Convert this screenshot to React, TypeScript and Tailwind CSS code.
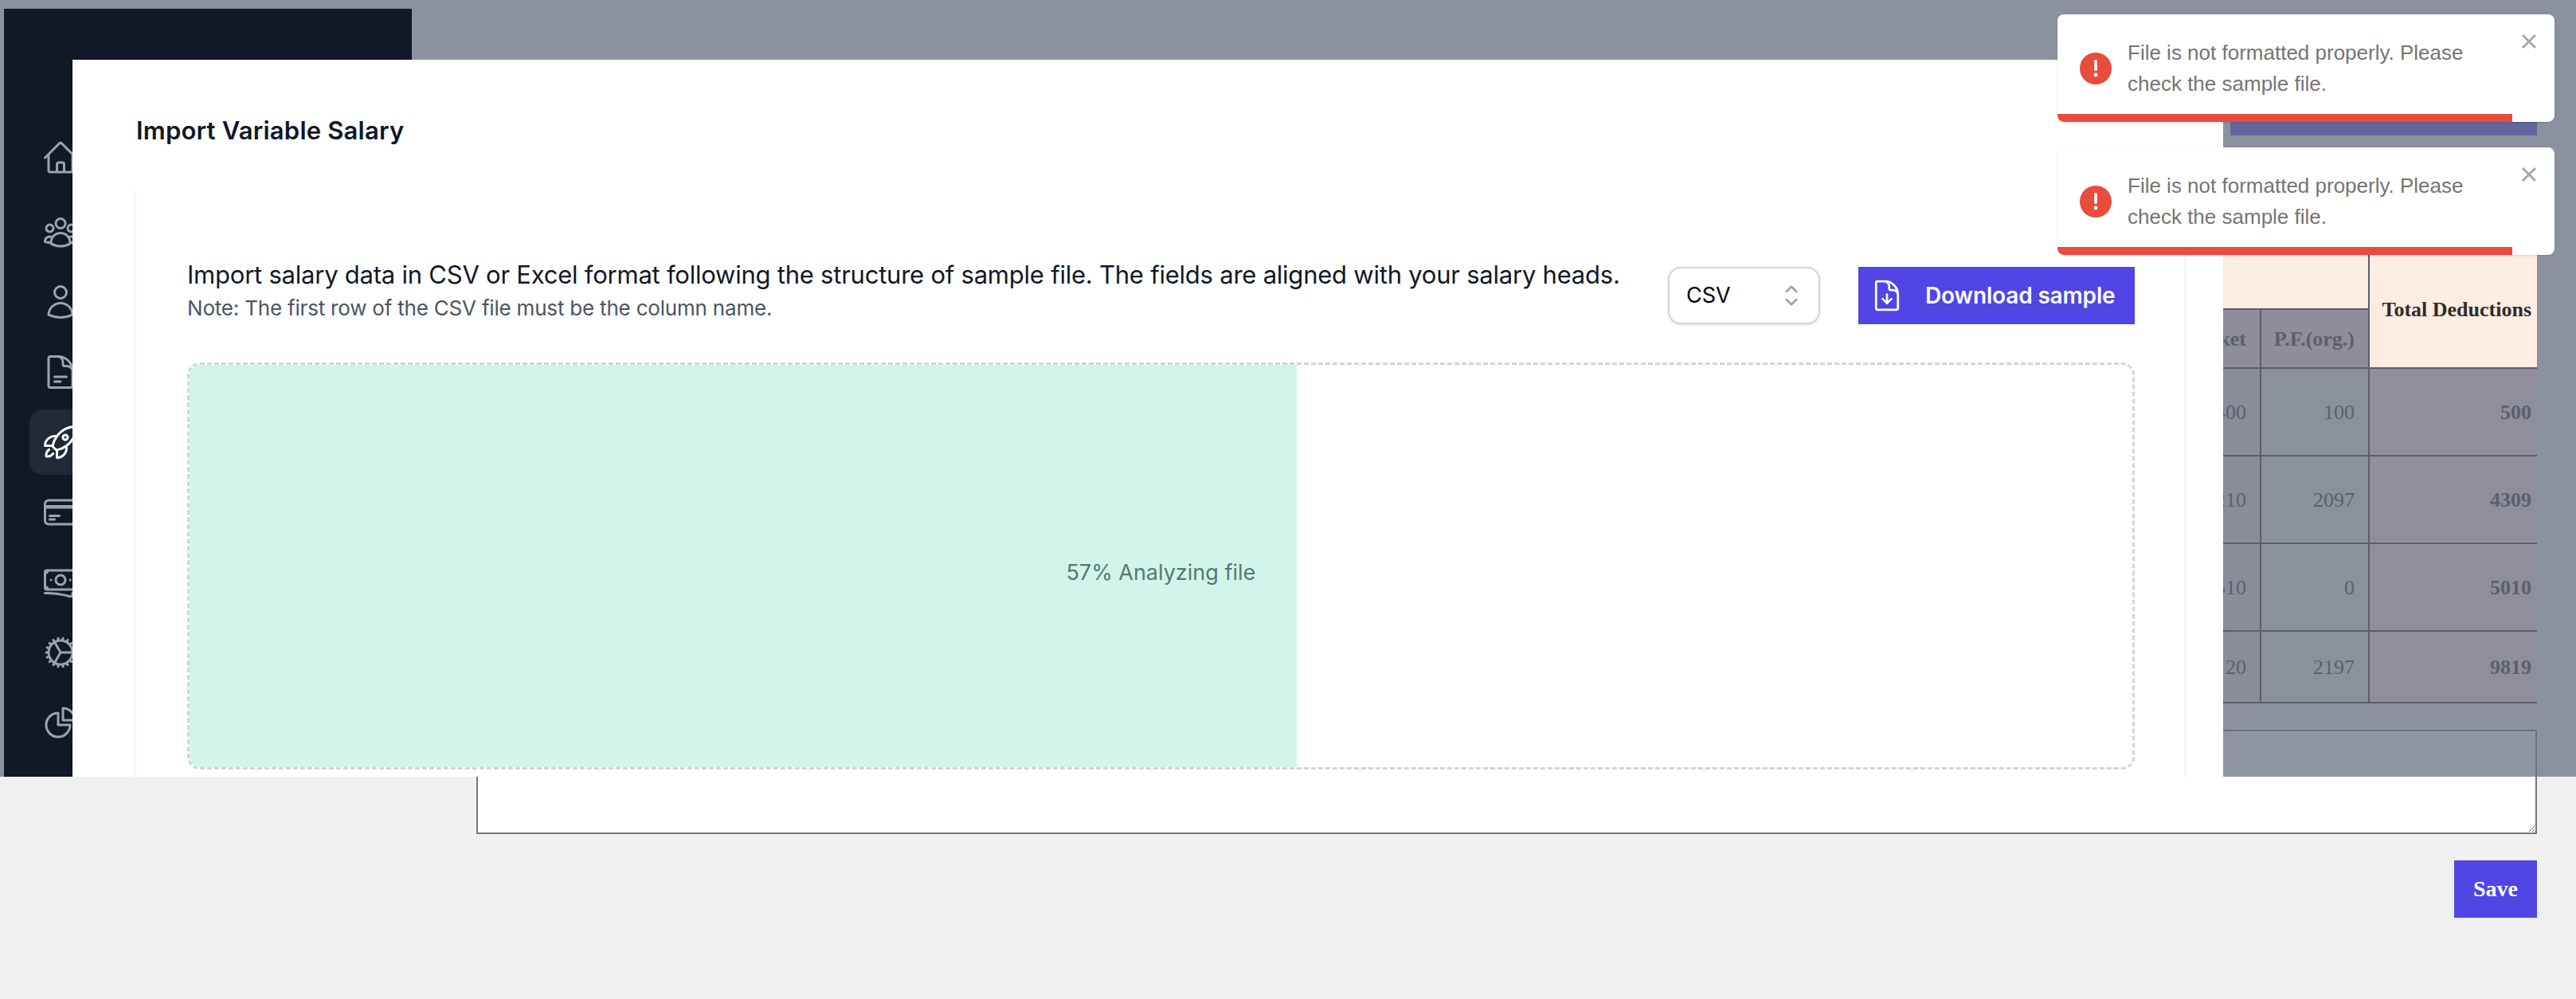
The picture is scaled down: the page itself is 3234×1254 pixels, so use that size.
import React from "react";
import {
  HiOutlineHome,
  HiOutlineUserGroup,
  HiOutlineUser,
  HiOutlineDocumentText,
  HiOutlineRocketLaunch,
  HiOutlineCreditCard,
  HiOutlineBanknotes,
  HiOutlineCog,
  HiOutlineChartPie,
  HiOutlineDocumentArrowDown,
  HiOutlineChevronUpDown,
} from "react-icons/hi2";

const navItems = [
  { Icon: HiOutlineHome, first: true },
  { Icon: HiOutlineUserGroup },
  { Icon: HiOutlineUser },
  { Icon: HiOutlineDocumentText },
  { Icon: HiOutlineRocketLaunch, active: true },
  { Icon: HiOutlineCreditCard },
  { Icon: HiOutlineBanknotes },
  { Icon: HiOutlineCog },
  { Icon: HiOutlineChartPie },
];

const rows = [
  { h: "h-[110px]", a: "400", b: "100", c: "500" },
  { h: "h-[110px]", a: "210", b: "2097", c: "4309" },
  { h: "h-[110px]", a: "510", b: "0", c: "5010" },
  { h: "h-[90px]", a: "120", b: "2197", c: "9819" },
];

function Toast() {
  return (
    <div className="relative h-[135px] w-[624px] overflow-hidden rounded-lg bg-white shadow-sm">
      <div className="flex h-[135px] items-center pl-[28px]">
        <div className="flex h-[40px] w-[40px] shrink-0 items-center justify-center rounded-full bg-[#e74c3c]">
          <svg width="8" height="24" viewBox="0 0 8 24" fill="white">
            <rect x="2.2" y="1" width="3.6" height="14" rx="1.6" />
            <circle cx="4" cy="20" r="2.4" />
          </svg>
        </div>
        <p className="ml-[20px] w-[480px] text-[26px] leading-[39px] text-[#757575] [font-family:'Liberation_Sans',Arial,sans-serif]">
          File is not formatted properly. Please check the sample file.
        </p>
      </div>
      <svg className="absolute right-[22px] top-[24px]" width="20" height="20" viewBox="0 0 20 20" stroke="#a9a9a9" strokeWidth="3" fill="none">
        <path d="M2 2 L18 18 M18 2 L2 18" />
      </svg>
      <div className="absolute bottom-0 left-0 h-[10px] w-[571px] rounded-bl-lg bg-[#e74c3c]" />
    </div>
  );
}

export default function App() {
  return (
    <div className="relative flex h-[1254px] w-[3234px] overflow-hidden bg-[#f0f0f0] [font-family:Inter,sans-serif]">
      {/* Sidebar */}
      <aside className="relative z-20 ml-[5px] mt-[11px] flex h-[964px] w-[512px] shrink-0 flex-col bg-[#111827] pl-[32px] pt-[146px]">
        <nav className="flex flex-col gap-[6px]">
          {navItems.map(({ Icon, active, first }, i) => (
            <div
              key={i}
              className={`flex h-[82px] w-[440px] items-center rounded-2xl pl-[15px] ${active ? "bg-[#1f2937] text-white" : "text-[#9ca3af]"} ${first ? "mb-[5px]" : ""}`}
            >
              <Icon size={48} strokeWidth={1.5} />
            </div>
          ))}
        </nav>
      </aside>

      {/* Page beneath the dialog */}
      <main className="flex min-w-0 flex-1 flex-col pl-[81px] pr-[49px] [font-family:'Liberation_Serif','Times_New_Roman',serif]">
        <div className="mt-[90px] h-[80px] w-[385px] self-end bg-[#4f46e5]" />
        <table className="relative z-10 mt-[146px] w-full table-fixed border-collapse text-[26px] text-[#5b606c]">
          <colgroup>
            <col />
            <col className="w-[136px]" />
            <col className="w-[211px]" />
          </colgroup>
          <thead>
            <tr className="h-[72px] bg-[#f9ede4]">
              <th colSpan={2} className="border-b-2 border-[#5a5f6b]" />
              <th rowSpan={2} className="border-b-2 border-l-2 border-[#5a5f6b] bg-[#fcece2] pr-[7px] text-right text-[26px] font-bold text-[#2e2c2c]">
                Total Deductions
              </th>
            </tr>
            <tr className="h-[74px] bg-[#8e8d99]">
              <th className="border-b-2 border-[#5a5f6b] pr-[17px] text-right font-bold">Pocket</th>
              <th className="border-b-2 border-l-2 border-[#5a5f6b] pr-[17px] text-right font-bold">P.F.(org.)</th>
            </tr>
          </thead>
          <tbody>
            {rows.map((r, i) => (
              <tr key={i} className={r.h}>
                <td className="border-b-2 border-[#5a5f6b] bg-[#8a8c98] pr-[17px] text-right">{r.a}</td>
                <td className="border-b-2 border-l-2 border-[#5a5f6b] bg-[#8a9199] pr-[17px] text-right">{r.b}</td>
                <td className="border-b-2 border-l-2 border-[#5a5f6b] bg-[#8f8e9a] pr-[7px] text-right font-bold">{r.c}</td>
              </tr>
            ))}
          </tbody>
        </table>
        <textarea className="mt-[33px] block h-[131px] w-full shrink-0 border-2 border-[#767676] bg-white" />
        <div className="mt-[33px] flex justify-end">
          <button className="h-[72px] w-[104px] bg-[#4f46e5] text-[28px] font-bold text-white">Save</button>
        </div>
      </main>

      {/* Overlay */}
      <div className="absolute inset-x-0 top-0 z-[5] h-[975px] bg-gray-500/75" />

      {/* Dialog */}
      <section className="absolute left-[91px] top-[75px] z-30 flex h-[900px] w-[2700px] flex-col overflow-hidden bg-white pl-[77px] pr-[46px]">
        <h2 className="ml-[3px] mt-[69px] h-[40px] text-[31px] font-semibold leading-[40px] tracking-[0.2px] text-[#111827]">Import Variable Salary</h2>
        <div className="mt-[56px] flex flex-1 flex-col border-x-[3px] border-[#f6f6f6] pl-[64px] pr-[62px] pt-[85px]">
          <div className="flex items-end">
            <div className="flex-1">
              <p className="text-[31px] leading-[40px] tracking-[-0.23px] text-[#111827]">
                Import salary data in CSV or Excel format following the structure of sample file. The fields are aligned with your salary heads.
              </p>
              <p className="mt-[2px] text-[26px] leading-[40px] tracking-[-0.2px] text-[#4b5563]">
                Note: The first row of the CSV file must be the column name.
              </p>
            </div>
            <div className="flex h-[72px] w-[191px] items-center justify-between rounded-2xl border-2 border-[#d1d5db] bg-white pl-[21px] pr-[14px] text-[27px] text-black shadow-sm">
              CSV
              <HiOutlineChevronUpDown size={40} className="text-[#9ca3af]" />
            </div>
            <button className="ml-[48px] flex h-[72px] w-[347px] items-center bg-[#4f46e5] pl-[14px] text-[28px] font-semibold tracking-[-0.15px] text-white">
              <HiOutlineDocumentArrowDown size={44} />
              <span className="ml-[26px]">Download sample</span>
            </button>
          </div>
          <div className="mt-[48px] h-[511px] w-full overflow-hidden rounded-2xl border-[3px] border-dashed border-[#d1d5db]">
            <div className="flex h-full w-[57%] items-center justify-end bg-[#d1f5ea] pr-[52px] pt-[18px] text-[27px] text-[#537a72]">
              57% Analyzing file
            </div>
          </div>
        </div>
      </section>

      {/* Toasts */}
      <div className="absolute right-[27px] top-[18px] z-40 flex flex-col gap-[32px]">
        <Toast />
        <Toast />
      </div>
    </div>
  );
}
